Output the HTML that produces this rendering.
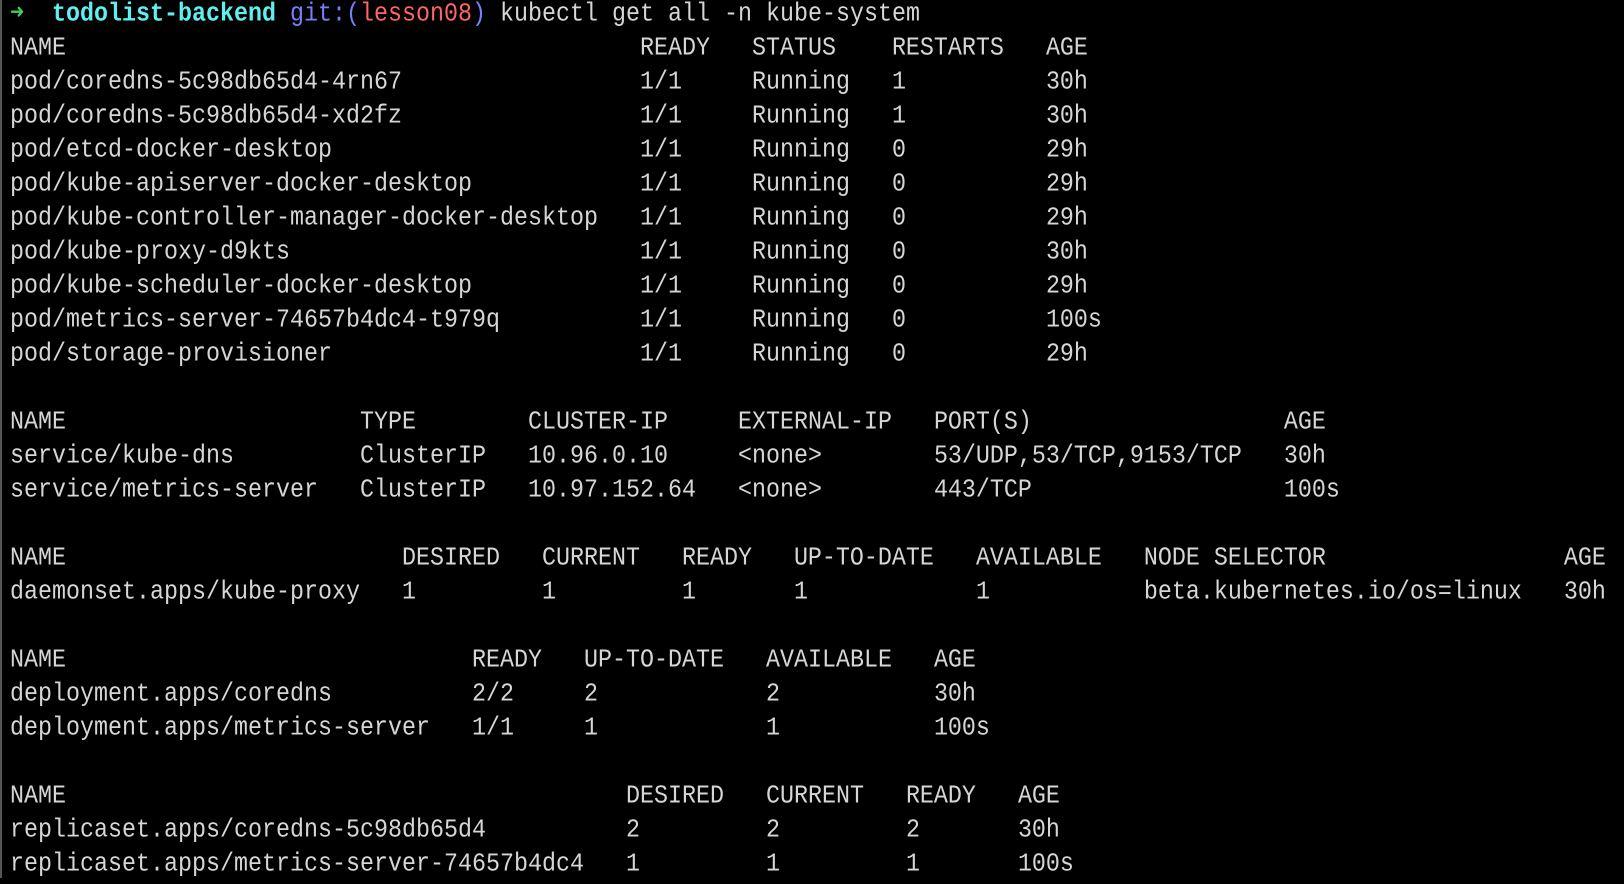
<!DOCTYPE html>
<html><head><meta charset="utf-8"><style>
html,body{margin:0;padding:0;background:#000;width:1624px;height:878px;overflow:hidden}
body{border-left:2px solid #555;box-sizing:border-box}
#t{position:absolute;left:10px;top:-2px;font-family:"Liberation Mono","DejaVu Sans Mono",monospace;font-size:23.33px;color:#d6d6d6}
.r{position:relative;height:34px;line-height:34px;white-space:pre}
.r span{position:absolute;top:0;transform:scaleY(1.12);transform-origin:0 50%}
.r span span{position:static;transform:none}
.g{color:#3fcf5a;font-weight:bold}.c{color:#5ef0f0;font-weight:bold}.b{color:#7580ff}.rd{color:#ff6565}
</style></head><body><div id="t"><div class="r"><span style="left:0"><span class="g">➜</span>  <span class="c">todolist-backend</span> <span class="b">git:(</span><span class="rd">lesson08</span><span class="b">)</span> kubectl get all -n kube-system</span></div><div class="r"><span style="left:0">NAME</span><span style="left:45ch">READY</span><span style="left:53ch">STATUS</span><span style="left:63ch">RESTARTS</span><span style="left:74ch">AGE</span></div><div class="r"><span style="left:0">pod/coredns-5c98db65d4-4rn67</span><span style="left:45ch">1/1</span><span style="left:53ch">Running</span><span style="left:63ch">1</span><span style="left:74ch">30h</span></div><div class="r"><span style="left:0">pod/coredns-5c98db65d4-xd2fz</span><span style="left:45ch">1/1</span><span style="left:53ch">Running</span><span style="left:63ch">1</span><span style="left:74ch">30h</span></div><div class="r"><span style="left:0">pod/etcd-docker-desktop</span><span style="left:45ch">1/1</span><span style="left:53ch">Running</span><span style="left:63ch">0</span><span style="left:74ch">29h</span></div><div class="r"><span style="left:0">pod/kube-apiserver-docker-desktop</span><span style="left:45ch">1/1</span><span style="left:53ch">Running</span><span style="left:63ch">0</span><span style="left:74ch">29h</span></div><div class="r"><span style="left:0">pod/kube-controller-manager-docker-desktop</span><span style="left:45ch">1/1</span><span style="left:53ch">Running</span><span style="left:63ch">0</span><span style="left:74ch">29h</span></div><div class="r"><span style="left:0">pod/kube-proxy-d9kts</span><span style="left:45ch">1/1</span><span style="left:53ch">Running</span><span style="left:63ch">0</span><span style="left:74ch">30h</span></div><div class="r"><span style="left:0">pod/kube-scheduler-docker-desktop</span><span style="left:45ch">1/1</span><span style="left:53ch">Running</span><span style="left:63ch">0</span><span style="left:74ch">29h</span></div><div class="r"><span style="left:0">pod/metrics-server-74657b4dc4-t979q</span><span style="left:45ch">1/1</span><span style="left:53ch">Running</span><span style="left:63ch">0</span><span style="left:74ch">100s</span></div><div class="r"><span style="left:0">pod/storage-provisioner</span><span style="left:45ch">1/1</span><span style="left:53ch">Running</span><span style="left:63ch">0</span><span style="left:74ch">29h</span></div><div class="r"></div><div class="r"><span style="left:0">NAME</span><span style="left:25ch">TYPE</span><span style="left:37ch">CLUSTER-IP</span><span style="left:52ch">EXTERNAL-IP</span><span style="left:66ch">PORT(S)</span><span style="left:91ch">AGE</span></div><div class="r"><span style="left:0">service/kube-dns</span><span style="left:25ch">ClusterIP</span><span style="left:37ch">10.96.0.10</span><span style="left:52ch">&lt;none&gt;</span><span style="left:66ch">53/UDP,53/TCP,9153/TCP</span><span style="left:91ch">30h</span></div><div class="r"><span style="left:0">service/metrics-server</span><span style="left:25ch">ClusterIP</span><span style="left:37ch">10.97.152.64</span><span style="left:52ch">&lt;none&gt;</span><span style="left:66ch">443/TCP</span><span style="left:91ch">100s</span></div><div class="r"></div><div class="r"><span style="left:0">NAME</span><span style="left:28ch">DESIRED</span><span style="left:38ch">CURRENT</span><span style="left:48ch">READY</span><span style="left:56ch">UP-TO-DATE</span><span style="left:69ch">AVAILABLE</span><span style="left:81ch">NODE SELECTOR</span><span style="left:111ch">AGE</span></div><div class="r"><span style="left:0">daemonset.apps/kube-proxy</span><span style="left:28ch">1</span><span style="left:38ch">1</span><span style="left:48ch">1</span><span style="left:56ch">1</span><span style="left:69ch">1</span><span style="left:81ch">beta.kubernetes.io/os=linux</span><span style="left:111ch">30h</span></div><div class="r"></div><div class="r"><span style="left:0">NAME</span><span style="left:33ch">READY</span><span style="left:41ch">UP-TO-DATE</span><span style="left:54ch">AVAILABLE</span><span style="left:66ch">AGE</span></div><div class="r"><span style="left:0">deployment.apps/coredns</span><span style="left:33ch">2/2</span><span style="left:41ch">2</span><span style="left:54ch">2</span><span style="left:66ch">30h</span></div><div class="r"><span style="left:0">deployment.apps/metrics-server</span><span style="left:33ch">1/1</span><span style="left:41ch">1</span><span style="left:54ch">1</span><span style="left:66ch">100s</span></div><div class="r"></div><div class="r"><span style="left:0">NAME</span><span style="left:44ch">DESIRED</span><span style="left:54ch">CURRENT</span><span style="left:64ch">READY</span><span style="left:72ch">AGE</span></div><div class="r"><span style="left:0">replicaset.apps/coredns-5c98db65d4</span><span style="left:44ch">2</span><span style="left:54ch">2</span><span style="left:64ch">2</span><span style="left:72ch">30h</span></div><div class="r"><span style="left:0">replicaset.apps/metrics-server-74657b4dc4</span><span style="left:44ch">1</span><span style="left:54ch">1</span><span style="left:64ch">1</span><span style="left:72ch">100s</span></div></div></body></html>
